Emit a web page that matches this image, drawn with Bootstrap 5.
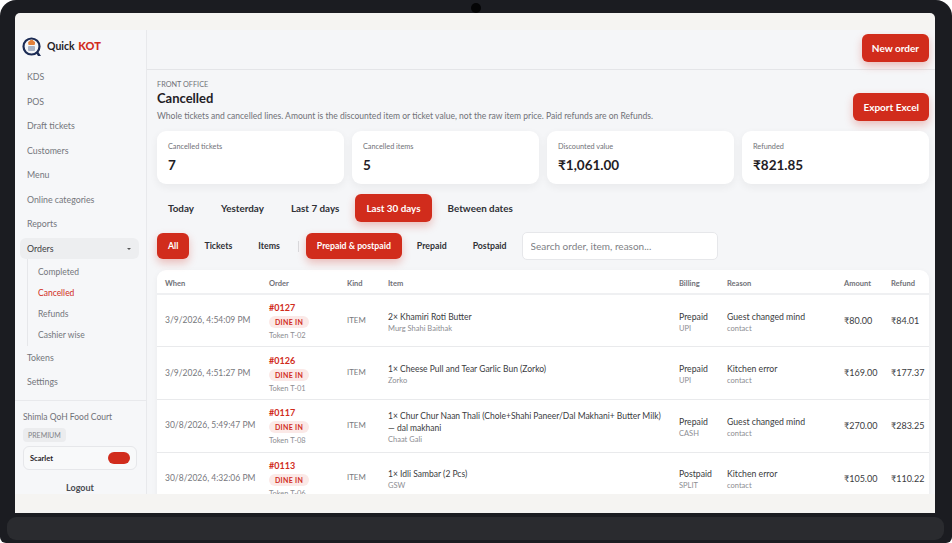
<!DOCTYPE html>
<html lang="en">
<head>
<meta charset="UTF-8" />
<title>Quick KOT - Cancelled</title>
<link href="https://cdn.jsdelivr.net/npm/bootstrap@5.3.0/dist/css/bootstrap.min.css" rel="stylesheet"/>
<style>
  :root { --red: #d12c1c; --ink: #1f2025; --mute: #707177; }
  html, body { height: 100%; }
  body { background: #fff; font-family: "Lato", "Liberation Sans", sans-serif; color: var(--ink); overflow: hidden; }
  .frame { width: 952px; height: 543px; background: #1b1c21; border-radius: 16px 16px 6px 6px; padding: 13px 17px 0 15px; position: relative; }
  .cam { position: absolute; top: 3px; left: 471px; width: 10px; height: 10px; border-radius: 50%; background: #050506; }
  .base { position: absolute; left: 7px; right: 8px; top: 517px; height: 23px; border-radius: 9px; background: #2a2b2f; }
  .screen { height: 500px; background: #f5f4f2; border-radius: 5px 5px 0 0; padding-top: 17px; overflow: hidden; }
  .app { height: 464px; display: flex; background: #f5f6f8; overflow: hidden; }
  .side { width: 132px; flex: none; background: #f6f7f9; border-right: 1px solid #e8e9ec; display: flex; flex-direction: column; }
  .brand { height: 33px; padding-left: 7px; gap: 5px; font-size: 10.5px; font-weight: 700; flex: none; }
  .brand b { color: var(--red); margin-left: 1px; font-size: 11px; }
  .side-nav { font-size: 8.8px; color: #74767c; padding: 2px 0 0 12px; flex-grow: 1; }
  .side-nav a { display: block; height: 24.5px; line-height: 24.5px; color: inherit; text-decoration: none; }
  .side-nav a.open { background: #edeef0; border-radius: 6px; margin: 1px 7px 0 -7px; padding: 0 8px 0 7px; height: 21px; line-height: 21px; display: flex; justify-content: space-between; align-items: center; color: #3d3e44; }
  .caret-mini { width: 0; height: 0; border: 2.5px solid transparent; border-top-color: #555; margin-top: 3px; }
  .sub-nav { padding: 3px 0 0 10px; font-size: 8.5px; border-left: 1px solid #e6e7ea; }
  .sub-nav a { height: 21px; line-height: 21px; }
  .sub-nav a.on { color: var(--red); }
  .side-foot { border-top: 1px solid #e8e9ec; padding: 10px 9px 0 8px; font-size: 8.5px; color: #707177; height: 94px; flex: none; }
  .plan { display: inline-block; background: #ebecee; color: #808186; font-size: 7px; border-radius: 4px; padding: 2px 5px; margin-top: 4px; }
  .scheme { border: 1px solid #e6e7ea; border-radius: 6px; height: 24px; margin-top: 4px; padding: 0 6px; font-size: 7.5px; font-weight: 700; color: var(--ink); background: #f8f9fa; }
  .toggle-pill { width: 22px; height: 12px; border-radius: 7px; background: var(--red); }
  .logout { text-align: center; font-size: 9px; font-weight: 700; color: #4a4b51; margin-top: 11px; }
  .main { flex-grow: 1; min-width: 0; display: flex; flex-direction: column; }
  .topstrip { height: 40px; flex: none; border-bottom: 1px solid #e4e5e8; padding: 4px 6px 0 0; text-align: right; }
  .btn-red { background: var(--red); color: #fff; border: 0; border-radius: 6px; font-weight: 700; font-size: 10px; box-shadow: 0 4px 8px rgba(209,44,28,.28); padding: 0 10px; height: 28px; }
  .btn-red:hover { background: var(--red); color: #fff; }
  .body-pad { padding: 10px 6px 0 10px; }
  .head-row .btn-red { margin-bottom: 1px; }
  .eyebrow { font-size: 7.3px; color: var(--mute); line-height: 10px; }
  h1.title { font-size: 13px; font-weight: 700; margin: 0 0 4px; line-height: 16px; }
  .desc { font-size: 8.55px; color: var(--mute); margin: 0; line-height: 12px; }
  .stat-row { gap: 8px; margin-top: 9px; }
  .stat { flex: 1 1 0; background: #fff; border-radius: 9px; height: 53px; padding: 11px 11px 0; box-shadow: 0 3px 8px rgba(30,32,40,.06); }
  .stat small { display: block; font-size: 7.3px; color: var(--mute); line-height: 10px; }
  .stat strong { display: block; font-size: 13.5px; line-height: 18px; margin-top: 4px; }
  .range { margin-top: 10px; gap: 5px; height: 28px; }
  .pill { border: 0; background: none; font-size: 9.85px; font-weight: 700; color: #303136; padding: 0 11px; height: 28px; border-radius: 6px; }
  .pill.active { background: var(--red); color: #fff; box-shadow: 0 4px 8px rgba(209,44,28,.28); }
  .filters { margin-top: 11px; height: 26px; gap: 4px; }
  .filters .pill { height: 26px; font-size: 8.75px; }
  .sepbar { width: 1px; height: 11px; background: #d8d9dc; margin: 0 3px; }
  .search { width: 196px; height: 28px; border: 1px solid #e6e7ea; background: #fff; border-radius: 5px; font-size: 10px; padding: 0 8px; color: #777; }
  .search::placeholder { color: #7e7f85; }
  .tbl-wrap { background: #fff; border-radius: 9px 9px 0 0; margin-top: 11px; box-shadow: 0 2px 6px rgba(30,32,40,.05); }
  .tbl { table-layout: fixed; width: 100%; margin: 0; font-size: 9px; color: #3a3b41; }
  .tbl th { font-size: 7.5px; font-weight: 700; color: #707177; padding: 4px 0 0 8px; height: 24px; border-bottom: 2px solid #eff0f2; vertical-align: middle; }
  .tbl td { padding: 0 0 0 8px; height: 52.7px; vertical-align: middle; border-bottom: 1px solid #e9eaec; background: none; color: #3a3b41; box-shadow: none; }
  .tbl td.stack { padding-top: 3px; font-size: 8.7px; }
  .tbl td.itemcol { font-size: 8.5px; }
  .tbl td.ordcol { padding-top: 1px; }
  .tbl td.dim { color: #77787d; font-size: 8.5px; white-space: nowrap; }
  .tbl td.kind { font-size: 7.9px; }
  .tbl .sub { display: block; font-size: 7.5px; color: #8c8d92; line-height: 11px; }
  .tbl .line { display: block; line-height: 12px; }
  .ord { display: block; color: var(--red); font-weight: 700; font-size: 9px; line-height: 13px; }
  .dine { display: block; width: fit-content; background: #fbe9e7; color: var(--red); font-size: 7px; font-weight: 700; border-radius: 6px; line-height: 12px; padding: 0 6px; margin: 2px 0; letter-spacing: .3px; }
  .c-when { width: 104px; } .c-order { width: 78px; } .c-kind { width: 41px; } .c-item { width: 291px; }
  .c-bill { width: 48px; } .c-reason { width: 117px; } .c-amt { width: 47px; }
</style>
</head>
<body>
<div class="frame">
  <div class="cam"></div>
  <div class="screen">
    <div class="app">
      <aside class="side">
        <div class="brand d-flex align-items-center">
          <svg width="20" height="20" viewBox="0 0 20 20">
            <circle cx="9.5" cy="9.5" r="8" fill="#f4f6f8" stroke="#1c2c55" stroke-width="2.2"/>
            <path d="M13.5 15 L16 19 L19 19 L16 14.5 Z" fill="#1c2c55"/>
            <path d="M6.2 6.5a2 2 0 0 1 1.4-2.6 2.4 2.4 0 0 1 4 0 2 2 0 0 1 1.4 2.6l-.4 1.6H6.6z" fill="#e2803a"/>
            <rect x="6" y="9" width="7" height="5" rx="1" fill="#aab4c6"/>
          </svg>
          <span>Quick <b>KOT</b></span>
        </div>
        <nav class="side-nav">
          <a href="#">KDS</a>
          <a href="#">POS</a>
          <a href="#">Draft tickets</a>
          <a href="#">Customers</a>
          <a href="#">Menu</a>
          <a href="#">Online categories</a>
          <a href="#">Reports</a>
          <a href="#" class="open">Orders <span class="caret-mini"></span></a>
          <div class="sub-nav">
            <a href="#">Completed</a>
            <a href="#" class="on">Cancelled</a>
            <a href="#">Refunds</a>
            <a href="#">Cashier wise</a>
          </div>
          <a href="#">Tokens</a>
          <a href="#">Settings</a>
        </nav>
        <div class="side-foot">
          <div>Shimla QoH Food Court</div>
          <span class="plan">PREMIUM</span>
          <div class="scheme d-flex align-items-center justify-content-between">Scarlet <span class="toggle-pill"></span></div>
          <div class="logout">Logout</div>
        </div>
      </aside>
      <div class="main">
        <div class="topstrip"><button class="btn btn-red">New order</button></div>
        <div class="body-pad">
          <div class="d-flex justify-content-between align-items-end head-row">
            <div>
              <div class="eyebrow">FRONT OFFICE</div>
              <h1 class="title">Cancelled</h1>
              <p class="desc">Whole tickets and cancelled lines. Amount is the discounted item or ticket value, not the raw item price. Paid refunds are on Refunds.</p>
            </div>
            <button class="btn btn-red">Export Excel</button>
          </div>
          <div class="d-flex stat-row">
            <div class="stat"><small>Cancelled tickets</small><strong>7</strong></div>
            <div class="stat"><small>Cancelled items</small><strong>5</strong></div>
            <div class="stat"><small>Discounted value</small><strong>₹1,061.00</strong></div>
            <div class="stat"><small>Refunded</small><strong>₹821.85</strong></div>
          </div>
          <div class="d-flex range">
            <button class="btn pill">Today</button>
            <button class="btn pill">Yesterday</button>
            <button class="btn pill">Last 7 days</button>
            <button class="btn pill active">Last 30 days</button>
            <button class="btn pill">Between dates</button>
          </div>
          <div class="d-flex align-items-center filters">
            <button class="btn pill active">All</button>
            <button class="btn pill">Tickets</button>
            <button class="btn pill">Items</button>
            <span class="sepbar"></span>
            <button class="btn pill active">Prepaid &amp; postpaid</button>
            <button class="btn pill">Prepaid</button>
            <button class="btn pill">Postpaid</button>
            <input class="search" placeholder="Search order, item, reason...">
          </div>
          <div class="tbl-wrap">
            <table class="table tbl">
              <colgroup>
                <col class="c-when"><col class="c-order"><col class="c-kind"><col class="c-item"><col class="c-bill"><col class="c-reason"><col class="c-amt"><col>
              </colgroup>
              <thead><tr><th>When</th><th>Order</th><th>Kind</th><th>Item</th><th>Billing</th><th>Reason</th><th>Amount</th><th>Refund</th></tr></thead>
              <tbody id="rows"></tbody>
            </table>
          </div>
        </div>
      </div>
    </div>
  </div>
  <div class="base"></div>
</div>
<script>
  const rows = [
    ['3/9/2026, 4:54:09 PM','#0127','T-02','2× Khamiri Roti Butter','Murg Shahi Baithak','Prepaid','UPI','Guest changed mind','₹80.00','₹84.01'],
    ['3/9/2026, 4:51:27 PM','#0126','T-01','1× Cheese Pull and Tear Garlic Bun (Zorko)','Zorko','Prepaid','UPI','Kitchen error','₹169.00','₹177.37'],
    ['30/8/2026, 5:49:47 PM','#0117','T-08','1× Chur Chur Naan Thali (Chole+Shahi Paneer/Dal Makhani+ Butter Milk) —&nbsp;dal makhani','Chaat Gali','Prepaid','CASH','Guest changed mind','₹270.00','₹283.25'],
    ['30/8/2026, 4:32:06 PM','#0113','T-06','1× Idli Sambar (2 Pcs)','GSW','Postpaid','SPLIT','Kitchen error','₹105.00','₹110.22']
  ];
  document.getElementById('rows').innerHTML = rows.map(r => `<tr>
    <td class="dim">${r[0]}</td>
    <td class="ordcol"><span class="ord">${r[1]}</span><span class="dine">DINE IN</span><span class="sub">Token ${r[2]}</span></td>
    <td class="dim kind">ITEM</td>
    <td class="stack itemcol"><span class="line">${r[3]}</span><span class="sub">${r[4]}</span></td>
    <td class="stack"><span class="line">${r[5]}</span><span class="sub">${r[6]}</span></td>
    <td class="stack"><span class="line">${r[7]}</span><span class="sub">contact</span></td>
    <td>${r[8]}</td>
    <td>${r[9]}</td>
  </tr>`).join('');
</script>
<script src="https://cdn.jsdelivr.net/npm/bootstrap@5.3.0/dist/js/bootstrap.bundle.min.js"></script>
</body>
</html>
